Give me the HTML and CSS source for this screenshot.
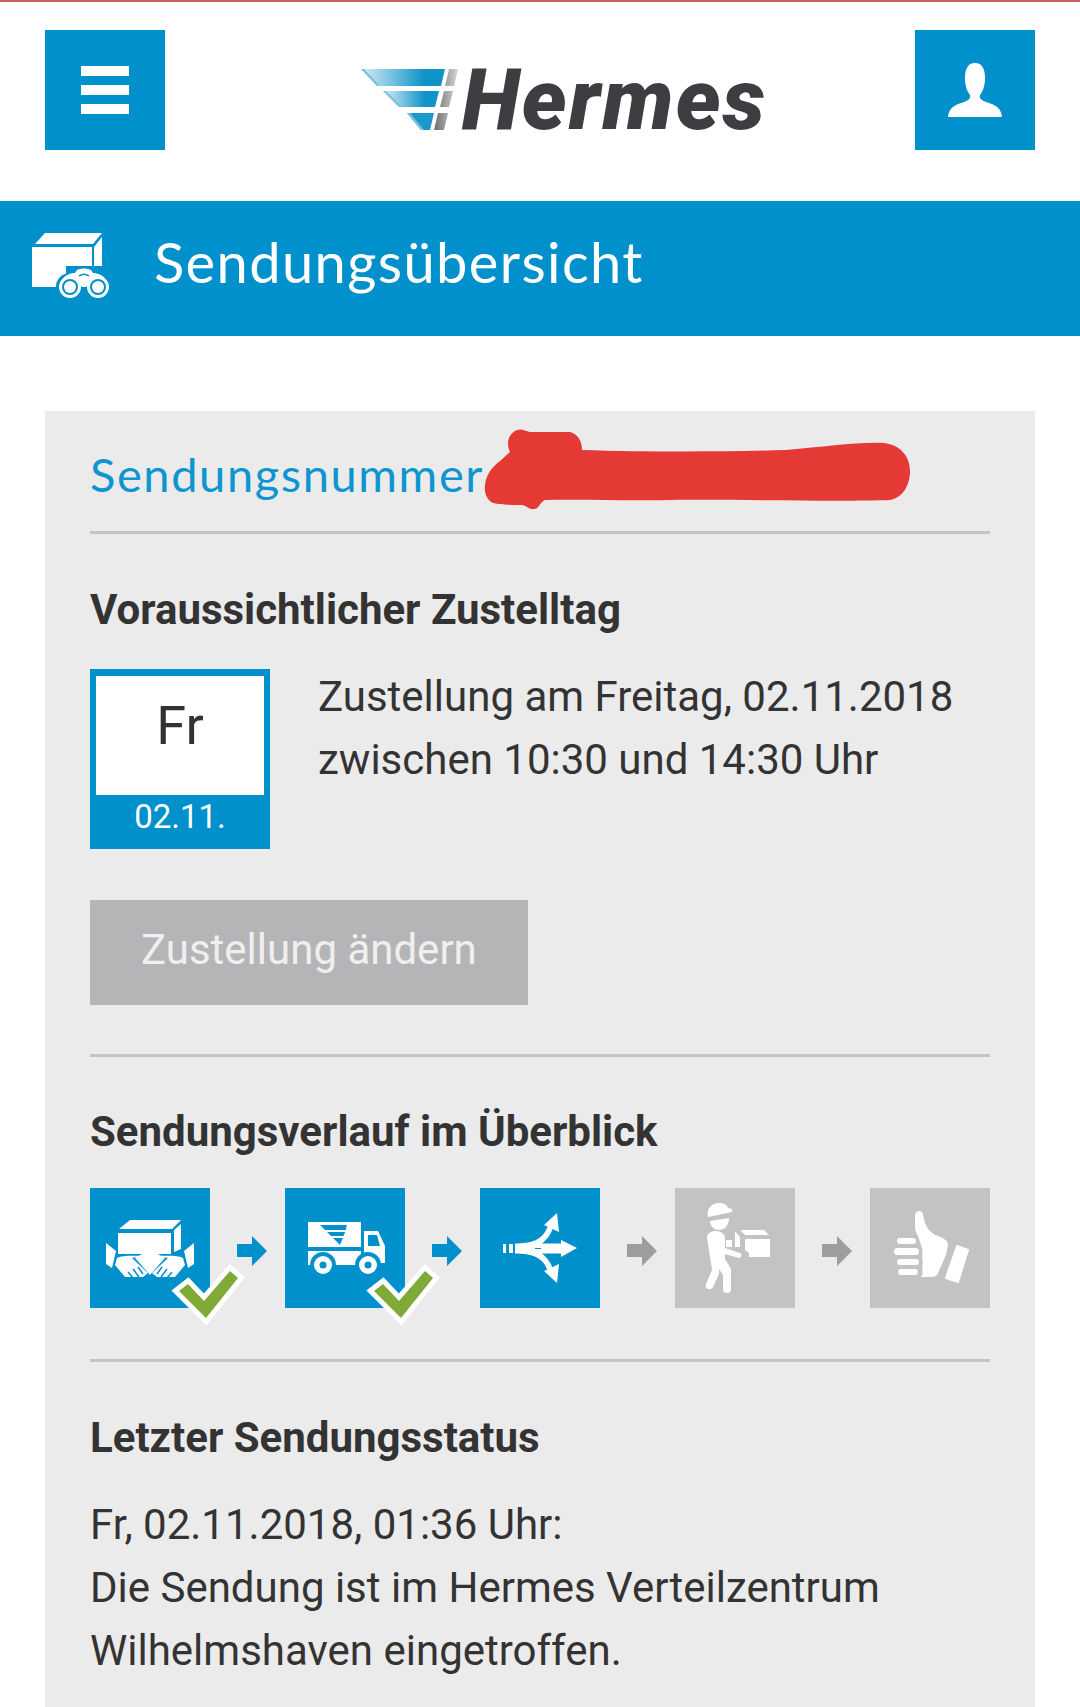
FILE: index.html
```html
<!DOCTYPE html>
<html lang="de">
<head>
  <meta charset="UTF-8">
  <meta name="viewport" content="width=device-width, initial-scale=1.0">
  <title>Hermes Sendungsübersicht</title>
  <link rel="stylesheet" href="styles.css">
</head>
<body>
  <div class="page">
    <header class="header">
      <button class="iconBtn" aria-label="Menü">
        <svg width="48" height="48" viewBox="0 0 48 48"><path fill="#fff" d="M0 0h48v10H0zM0 19h48v10H0zM0 38h48v10H0z"/></svg>
      </button>
      <div class="logo">
        <svg class="logoMark" width="97" height="61" viewBox="0 0 97 61">
          <defs>
            <linearGradient id="logoBlue" x1="0" y1="0" x2="1" y2="0">
              <stop offset="0" stop-color="#d9edf6"/>
              <stop offset="0.75" stop-color="#0f93c9"/>
            </linearGradient>
            <linearGradient id="logoSilver" x1="0" y1="0" x2="1" y2="0">
              <stop offset="0" stop-color="#6d6e70"/>
              <stop offset="1" stop-color="#d4d5d6"/>
            </linearGradient>
          </defs>
          <path fill="url(#logoBlue)" d="M0 0h84l-4 17H16z"/>
          <path fill="url(#logoBlue)" d="M22 22h56l-4 16H38z"/>
          <path fill="#1b97cb" d="M46 44h27l-4 17h-9z"/>
          <path fill="#7dbedd" d="M0 0h3l16 17h-3zM22 22h3l16 16h-3zM46 44h3l14 17h-3z"/>
          <path fill="url(#logoSilver)" d="M88 0h9l-4 17h-9zM83 22h9l-4 16h-9zM77 44h10l-4 17H73z"/>
        </svg>
        <span class="logoText">Hermes</span>
      </div>
      <button class="iconBtn" aria-label="Konto">
        <svg width="54" height="54" viewBox="0 0 54 54"><path fill="#fff" d="M27 0c7 0 10 6 10 15 0 8-2 13-5 17-1 3 1 5 6 7 10 3 15 6 16 15H0c1-9 6-12 16-15 5-2 7-4 6-7-3-4-5-9-5-17C17 6 20 0 27 0z"/></svg>
      </button>
    </header>

    <div class="titleBar">
      <svg class="titleIcon" width="80" height="72" viewBox="0 0 80 72">
        <path fill="#fff" d="M3 14 13 3h57l-9 11zM0 17h60v40H0zM62 17l8-10v33h-8z"/>
        <circle cx="38" cy="57" r="14" fill="#0090cc"/>
        <circle cx="66" cy="57" r="14" fill="#0090cc"/>
        <path fill="#0090cc" d="M34 36h36v14H34z"/>
        <path fill="#fff" d="M30 50c3-5 8-7 13-7l2-3c5-2 9-2 14 0l2 3c5 0 10 2 13 7l-16 3-4 4h-4l-4-4z"/>
        <path fill="none" stroke="#0090cc" stroke-width="1.500" d="M47 46c3-2 7-2 10 0"/>
        <circle cx="38" cy="57" r="9.500" fill="#0090cc" stroke="#fff" stroke-width="3"/>
        <circle cx="66" cy="57" r="9.500" fill="#0090cc" stroke="#fff" stroke-width="3"/>
        <circle cx="38" cy="57" r="6" fill="#fff"/>
        <circle cx="66" cy="57" r="6" fill="#fff"/>
      </svg>
      <h1>Sendungsübersicht</h1>
    </div>

    <main class="card">
      <div class="numberRow">Sendungsnummer</div>
      <svg class="scribble" width="990" height="110" viewBox="0 0 990 110">
        <path fill="#e53935" d="M440 74C441 64 447 56 455 50L465 41C461 32 463 23 472 19C478 17 481 21 487 21L525 21C533 23 537 30 537 39C600 41 680 41 741 39C780 36 810 31 839 32C855 34 865 45 865 60C865 75 857 87 845 89C790 91 690 88 626 89C580 90 540 88 500 89C495 91 494 98 489 98C484 99 481 94 477 94C465 94 452 94 446 91C441 87 439 81 440 74Z"/>
      </svg>

      <section class="block dateBlock">
        <h2>Voraussichtlicher Zustelltag</h2>
        <div class="dateRow">
          <div class="dateBox">
            <div class="dayName">Fr</div>
            <div class="dayDate">02.11.</div>
          </div>
          <p class="dateText">Zustellung am Freitag, 02.11.2018<br>zwischen 10:30 und 14:30 Uhr</p>
        </div>
        <button class="changeBtn">Zustellung ändern</button>
      </section>

      <section class="block stepsBlock">
        <h2>Sendungsverlauf im Überblick</h2>
        <div class="steps">
          <div class="step">
            <svg width="120" height="120" viewBox="0 0 120 120">
              <path fill="#fff" d="M29 41 40 32h51l-9 9zM28 45h53v21H68l7 4-15 17-15-17 7-4H28zM84 42l7-6v25l-7 3z"/>
              <path fill="#fff" d="M16 55l10 8-4 17-6-4zM104 55l-10 8 4 17 6-4z"/>
              <path fill="#fff" d="M27 70c6-3 17-2 26-2l-11 2 16 15-5 4H35L25 77z"/>
              <path fill="#fff" d="M93 70c-6-3-17-2-26-2l11 2-16 15 5 4h18l10-12z"/>
              <path fill="none" stroke="#0090cc" stroke-width="1.500" d="M38 84l5 6M43 81l6 8M48 79l5 7M82 84l-5 6M77 81l-6 8M72 79l-5 7"/>
              <path class="checkMark" d="M89 103l9-7 16 17 26-30 8 7-32 40z"/>
            </svg>
          </div>
          <div class="arrow"><svg width="30" height="30" viewBox="0 0 30 30"><path fill="#0090cc" d="M0 8h15V0l15 15-15 15v-9H0z"/></svg></div>
          <div class="step">
            <svg width="120" height="120" viewBox="0 0 120 120">
              <path fill="#fff" d="M23 34h53v25H23zM79 43h14l7 15v17H79zM23 63h53v14H23z"/>
              <path fill="#0090cc" d="M35 37h28l-8 20z"/>
              <path fill="#fff" d="M40 42h22v2H40zM45 48h16v2H45zM62 36h1.500l-4 21H58z"/>
              <path fill="#0090cc" d="M83 47h9l3 11H83z"/>
              <circle cx="38" cy="77" r="13" fill="#0090cc"/>
              <circle cx="83" cy="77" r="13" fill="#0090cc"/>
              <circle cx="38" cy="77" r="9" fill="#fff"/>
              <circle cx="83" cy="77" r="9" fill="#fff"/>
              <circle cx="38" cy="77" r="3.500" fill="#0090cc"/>
              <circle cx="83" cy="77" r="3.500" fill="#0090cc"/>
              <path class="checkMark" d="M89 103l9-7 16 17 26-30 8 7-32 40z"/>
            </svg>
          </div>
          <div class="arrow"><svg width="30" height="30" viewBox="0 0 30 30"><path fill="#0090cc" d="M0 8h15V0l15 15-15 15v-9H0z"/></svg></div>
          <div class="step">
            <svg width="120" height="120" viewBox="0 0 120 120">
              <path fill="#fff" d="M23 56h3v9h-3zM29 56h4v9h-4z"/>
              <path fill="#fff" d="M35 55.500c16 0 28-3 33-18l5 2c-2 7-6 12-11 16h21v10H62c5 4 9 9 11 16l-5 2c-5-15-17-18-33-18z"/>
              <path fill="#0090cc" d="M55 60h6v1h-6z"/>
              <path fill="#fff" d="M77 25l2 19-15-7zM77 95l2-19-15 7zM81 52l16 8-16 9z"/>
            </svg>
          </div>
          <div class="arrow"><svg width="30" height="30" viewBox="0 0 30 30"><path fill="#9d9d9f" d="M0 8h15V0l15 15-15 15v-9H0z"/></svg></div>
          <div class="step isOpen">
            <svg width="120" height="120" viewBox="0 0 120 120">
              <path fill="#fff" d="M33 29c-2-8 4-14 11-14 5 0 8 2 9 5l4 1v3z"/>
              <path fill="#fff" d="M35 33l19-3c0 7-4 12-10 12-5 0-9-4-9-9z"/>
              <path fill="#fff" d="M32 50c0-5 4-7 9-7s9 3 9 8v9l15 5c2 1 2 5-1 5l-14-4v5l6 10v21c0 4-8 4-8 0V87l-4-6v5l-6 13c-2 4-9 2-7-3l6-14-1-7z"/>
              <path fill="#fff" d="M51 52h6v7h-6zM60 43l5 6v10h-5zM65 42h24l5 5H70zM70 51h25v18H74v-4l-4-3z"/>
            </svg>
          </div>
          <div class="arrow"><svg width="30" height="30" viewBox="0 0 30 30"><path fill="#9d9d9f" d="M0 8h15V0l15 15-15 15v-9H0z"/></svg></div>
          <div class="step isOpen">
            <svg width="120" height="120" viewBox="0 0 120 120">
              <rect x="27" y="50" width="19" height="6" rx="3" fill="#fff"/>
              <rect x="24" y="60" width="25" height="7" rx="3.500" fill="#fff"/>
              <rect x="27" y="71" width="22" height="6" rx="3" fill="#fff"/>
              <rect x="28" y="81" width="20" height="6" rx="3" fill="#fff"/>
              <path fill="#fff" d="M45 29c0-4 2-6 4-6s4 1 4 4l2 8c2 5 5 9 10 12 7 2 13 5 13 10l-2 10-8 18c-1 3-4 4-7 4H51c2-3 2-7 1-10 1-3 1-7 0-10 1-3 0-7 0-9l-4-12c-2-3-3-6-3-9z"/>
              <path fill="#fff" stroke="#fff" stroke-width="2" stroke-linejoin="round" d="M87 58l11 4-10 32-12-4z"/>
            </svg>
          </div>
        </div>
      </section>

      <section class="block statusBlock">
        <h2>Letzter Sendungsstatus</h2>
        <p class="statusText">Fr, 02.11.2018, 01:36 Uhr:<br>Die Sendung ist im Hermes Verteilzentrum<br>Wilhelmshaven eingetroffen.</p>
      </section>
    </main>
  </div>
</body>
</html>
```

FILE: styles.css
```css
* {
  margin: 0;
  padding: 0;
  box-sizing: border-box;
}
body {
  background: #fff;
  color: #333;
  font-family: Roboto, Arial, sans-serif;
  height: 1707px;
  overflow: hidden;
}
.page {
  height: 1707px;
  display: flex;
  flex-direction: column;
  border-top: 2px solid #c9605c;
}
.header {
  flex: none;
  display: flex;
  justify-content: space-between;
  padding: 28px 45px 51px;
}
.iconBtn {
  width: 120px;
  height: 120px;
  border: none;
  background: #0090cc;
  display: flex;
  align-items: center;
  justify-content: center;
}
.logo {
  display: flex;
  align-items: flex-start;
  margin: 39px 0 0 48px;
  height: 62px;
}
.logoMark {
  display: block;
  margin-right: 4px;
}
.logoText {
  font-family: Roboto, sans-serif;
  font-weight: 900;
  font-style: italic;
  font-size: 85px;
  letter-spacing: 2.2px;
  line-height: 62px;
  color: #3e3e42;
}
.titleBar {
  flex: none;
  height: 135px;
  background: #0090cc;
  color: #fff;
  display: flex;
  align-items: center;
  padding: 0 0 0 32px;
}
.titleIcon {
  margin: -5px 42px 0 0;
}
.titleBar h1 {
  font-family: Lato, sans-serif;
  font-weight: 400;
  font-size: 56px;
  letter-spacing: 1.4px;
  line-height: 64px;
  margin-top: -14px;
}
.card {
  position: relative;
  flex: 1;
  min-height: 0;
  margin: 75px 45px 0;
  padding: 0 45px;
  background: #ebebeb;
}
.scribble {
  position: absolute;
  left: 0;
  top: 0;
}
.numberRow {
  font-family: Lato, sans-serif;
  font-size: 47px;
  letter-spacing: 1.6px;
  line-height: 56px;
  color: #0e95cf;
  padding: 35px 0 29px;
}
.block {
  border-top: 3px solid #c4c4c4;
  padding: 50px 0 49px;
}
.dateBlock {
  padding-top: 52px;
}
.stepsBlock {
  padding: 51px 0 51px;
}
.statusBlock {
  padding-top: 52px;
}
h2 {
  font-size: 42px;
  line-height: 48px;
  font-weight: 700;
  color: #333;
  margin-bottom: 36px;
}
.dateRow {
  display: flex;
  gap: 48px;
  margin-top: -1px;
}
.dateBox {
  width: 180px;
  height: 180px;
  background: #0090cc;
  padding-top: 7px;
  text-align: center;
}
.dayName {
  width: 168px;
  height: 119px;
  margin: 0 auto;
  background: #fff;
  color: #333;
  font-size: 54px;
  line-height: 100px;
}
.dayDate {
  color: #fff;
  font-size: 33px;
  line-height: 44px;
}
.dateText, .statusText {
  font-size: 42px;
  line-height: 63px;
}
.dateText {
  margin-top: -4px;
}
.changeBtn {
  display: block;
  width: 438px;
  height: 105px;
  margin-top: 51px;
  border: none;
  background: #b5b5b7;
  color: #efefef;
  font-family: Roboto, sans-serif;
  font-size: 42px;
  text-align: left;
  padding: 0 0 7px 51px;
}
.steps {
  display: flex;
  margin-top: -4px;
}
.step {
  width: 120px;
  height: 120px;
  background: #0090cc;
  flex: none;
}
.step svg {
  display: block;
  overflow: visible;
}
.step.isOpen {
  background: #c3c3c5;
}
.arrow {
  width: 75px;
  flex: none;
  padding: 48px 0 0 27px;
}
.arrow svg {
  display: block;
}
.checkMark {
  fill: #7faa38;
  stroke: #fff;
  stroke-width: 10px;
  paint-order: stroke;
}
.statusText {
  color: #333;
  margin-top: -5px;
}
```
